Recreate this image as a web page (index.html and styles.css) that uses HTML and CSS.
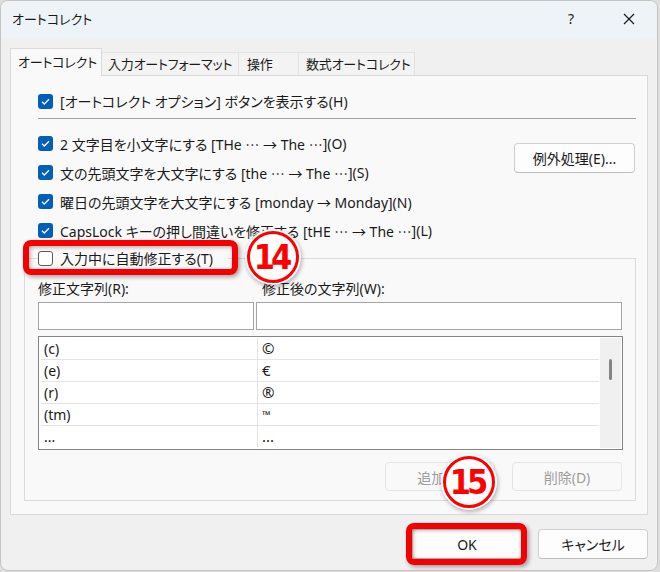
FILE: index.html
```html
<!DOCTYPE html>
<html>
    <head>
        <title>オートコレクト</title>
        <link rel="stylesheet" href="styles.css">
    </head>
    <body>
        <div class="window">
            <div class="titlebar">
                <span class="title">オートコレクト</span>
                <span class="help">?</span>
                <span class="close">
                    <svg width="12" height="12" viewBox="0 0 12 12"><path d="M1 1 L11 11 M11 1 L1 11" stroke="#1a1a1a" stroke-width="1.2" fill="none"/></svg>
                </span>
            </div>

            <div class="body">
                <div class="tabs">
                    <div class="tab active">オートコレクト</div>
                    <div class="tab t2">入力オートフォーマット</div>
                    <div class="tab t3">操作</div>
                    <div class="tab t4">数式オートコレクト</div>
                </div>

                <div class="panel">
                    <div class="check first"><span class="box on"></span>[オートコレクト オプション] ボタンを表示する(H)</div>
                    <div class="sep"></div>

                    <div class="opts">
                        <div class="opt-list">
                            <div class="check row"><span class="box on"></span>2 文字目を小文字にする [THe <span class="el">…</span> → The <span class="el">…</span>](O)</div>
                            <div class="check row"><span class="box on"></span>文の先頭文字を大文字にする [the <span class="el">…</span> → The <span class="el">…</span>](S)</div>
                            <div class="check row"><span class="box on"></span>曜日の先頭文字を大文字にする [monday → Monday](N)</div>
                            <div class="check row"><span class="box on"></span>CapsLock キーの押し間違いを修正する [tHE <span class="el">…</span> → The <span class="el">…</span>](L)</div>
                        </div>
                        <button class="btn except">例外処理(E)...</button>
                    </div>

                    <div class="group">
                        <div class="legend">
                            <div class="check"><span class="box"></span>入力中に自動修正する(T)</div>
                            <div class="mark-box legend-mark"></div>
                            <div class="badge b14">14</div>
                        </div>

                        <div class="fields">
                            <div class="lbl">修正文字列(R):</div>
                            <div class="lbl lbl2">修正後の文字列(W):</div>
                            <div class="input"></div>
                            <div class="input"></div>
                        </div>

                        <div class="list">
                            <div class="rows">
                                <div class="lrow"><span class="c1">(c)</span><span class="c2">©</span></div>
                                <div class="lrow"><span class="c1">(e)</span><span class="c2">€</span></div>
                                <div class="lrow"><span class="c1">(r)</span><span class="c2">®</span></div>
                                <div class="lrow"><span class="c1">(tm)</span><span class="c2 tm">™</span></div>
                                <div class="lrow"><span class="c1">...</span><span class="c2">...</span></div>
                            </div>
                            <div class="scroll"><span class="thumb"></span></div>
                        </div>

                        <div class="actions">
                            <button class="btn off">追加(A)</button>
                            <button class="btn off">削除(D)</button>
                            <div class="badge b15">15</div>
                        </div>
                    </div>
                </div>

                <div class="footer">
                    <div class="ok-wrap">
                        <button class="btn dlg">OK</button>
                        <div class="mark-box ok-mark"></div>
                    </div>
                    <button class="btn dlg">キャンセル</button>
                </div>
            </div>
        </div>
    </body>
</html>
```

FILE: styles.css
```css
body {
    margin: 0;
    background-color: #dedede;
    font-family: "Noto Sans", "Noto Sans CJK JP", sans-serif;
    font-feature-settings: "palt";
    font-size: 14px;
    color: #1a1a1a;
}

.window {
    width: 656px;
    height: 569px;
    background-color: #f0f0f0;
    border: 1px solid #c4c4c4;
    border-radius: 8px;
    overflow: hidden;
}

/* title bar */
.titlebar {
    height: 37px;
    background-color: #eef3f7;
    display: flex;
    align-items: center;
    padding-left: 11px;
}

.title {
    font-size: 13px;
    flex: 1;
    margin-top: -2px;
}

.help {
    width: 30px;
    text-align: center;
    font-size: 14px;
    margin-right: 20px;
    margin-top: -2px;
}

.close {
    width: 46px;
    height: 30px;
    display: flex;
    align-items: center;
    justify-content: center;
    margin-right: 5px;
    margin-top: -2px;
}

.body {
    padding: 11px 9px 0 9px;
}

/* tabs */
.tabs {
    display: flex;
    align-items: flex-end;
    height: 26px;
    font-size: 13px;
    letter-spacing: -0.2px;
}

.tab {
    height: 22px;
    line-height: 22px;
    background-color: #f3f3f3;
    border: 1px solid #e2e2e2;
    border-bottom: none;
    border-left: none;
    padding-left: 6px;
    box-sizing: content-box;
    white-space: nowrap;
    overflow: hidden;
}

.tab.active {
    height: 27px;
    line-height: 26px;
    width: 83px;
    padding-left: 7px;
    background-color: #f9f9f9;
    border: 1px solid #d9d9d9;
    border-bottom: none;
    margin-bottom: -1px;
    position: relative;
    z-index: 1;
}

.tab.t2 { width: 130px; }
.tab.t3 { width: 51px; padding-left: 8px; }
.tab.t4 { width: 108px; padding-left: 7px; }

/* tab page */
.panel {
    width: 598px;
    height: 438px;
    background-color: #f9f9f9;
    border: 1px solid #d9d9d9;
    padding: 0 11px 0 27px;
}

.check {
    display: flex;
    align-items: center;
    height: 22px;
    white-space: pre;
}

.check.first {
    margin-top: 14px;
}

/* full width ellipsis like the system font */
.el {
    font-family: "Noto Sans CJK JP", sans-serif;
    font-feature-settings: normal;
}

.box {
    width: 13px;
    height: 13px;
    border: 1px solid #5c5c5c;
    border-radius: 3px;
    background-color: #fff;
    margin-right: 7px;
    flex: none;
}

.box.on {
    width: 15px;
    height: 15px;
    border: none;
    background-color: #005fb8;
    background-image: url("data:image/svg+xml,%3Csvg xmlns='http://www.w3.org/2000/svg' width='15' height='15'%3E%3Cpath d='M4 7.8 L6.3 10 L11 5.2' stroke='white' stroke-width='1.3' fill='none'/%3E%3C/svg%3E");
}

.sep {
    height: 1px;
    background-color: #a0a0a0;
    margin-top: 6px;
}

.opts {
    display: flex;
    margin-top: 10px;
}

.check.row {
    height: 29px;
}

.btn {
    font-family: inherit;
    font-feature-settings: "palt";
    font-size: 14px;
    color: #1a1a1a;
    background-color: #fdfdfd;
    border: 1px solid #d0d0d0;
    border-bottom-color: #bcbcbc;
    border-radius: 4px;
    padding: 0;
}

.except {
    width: 121px;
    height: 30px;
    margin-top: 14px;
    margin-left: auto;
    margin-right: 1px;
}

/* replacement group */
.group {
    margin: 13px 0 0 -14px;
    border: 1px solid #dcdcdc;
    padding: 0 12px 9px 13px;
    height: 232px;
}

.legend {
    position: relative;
    margin-top: -12px;
    width: 190px;
    background-color: #f9f9f9;
}

.mark-box {
    position: absolute;
    border: 6px solid #f40000;
    border-radius: 8px;
    box-shadow: 2px 2px 4px rgba(0, 0, 0, 0.35), inset 1px 1px 4px rgba(0, 0, 0, 0.35);
}

.legend-mark {
    left: -15px;
    top: -7px;
    width: 203px;
    height: 23px;
}

.badge {
    position: absolute;
    width: 46px;
    height: 46px;
    border: 3px solid #f00;
    border-radius: 50%;
    background-color: #fff;
    box-shadow: 0 0 0 2px #fff, 1px 2px 4px 2px rgba(0, 0, 0, 0.3);
    color: #f00;
    font-family: "DejaVu Sans Condensed", "DejaVu Sans", sans-serif;
    font-weight: bold;
    font-size: 34px;
    letter-spacing: -4px;
    line-height: 46px;
    text-align: center;
    text-indent: -4px;
}

.b14 {
    left: 209px;
    top: -16px;
}

.fields {
    display: grid;
    grid-template-columns: 216px 366px;
    column-gap: 2px;
    margin-top: 10px;
}

.lbl {
    height: 20px;
    line-height: 20px;
    margin-bottom: 3px;
}

.lbl2 {
    padding-left: 6px;
}

.input {
    height: 26px;
    background-color: #fff;
    border: 1px solid #a5a5a5;
}

.list {
    margin-top: 6px;
    height: 110px;
    border: 1px solid #848484;
    background-color: #fff;
    padding: 1px 1px 1px 2px;
    display: flex;
}

.rows {
    flex: 1;
}

.lrow {
    display: flex;
    height: 21px;
    line-height: 21px;
    border-bottom: 1px solid #e4e4e4;
}

.lrow:last-child {
    border-bottom: none;
}

.c1 {
    width: 213px;
    padding-left: 3px;
    border-right: 1px solid #e4e4e4;
}

.c2 {
    padding-left: 4px;
    font-size: 15px;
}

.c2.tm {
    font-size: 11px;
}

.scroll {
    width: 21px;
    background-color: #f0f0f0;
    display: flex;
    justify-content: center;
    margin-left: 1px;
}

.thumb {
    width: 3px;
    height: 21px;
    margin-top: 21px;
    border-radius: 2px;
    background-color: #858585;
}

.actions {
    position: relative;
    display: flex;
    justify-content: flex-end;
    gap: 17px;
    margin-top: 12px;
    padding-right: 1px;
}

.btn.off {
    width: 110px;
    height: 29px;
    color: #9d9d9d;
    background-color: #f9f9f9;
    border-color: #e5e5e5;
}

.b15 {
    left: 405px;
    top: -6px;
}

/* dialog buttons */
.footer {
    display: flex;
    justify-content: flex-end;
    gap: 16px;
    margin-top: 14px;
}

.ok-wrap {
    position: relative;
}

.btn.dlg {
    width: 110px;
    height: 30px;
}

.ok-mark {
    left: -6px;
    top: -6px;
    width: 109px;
    height: 30px;
}
```
